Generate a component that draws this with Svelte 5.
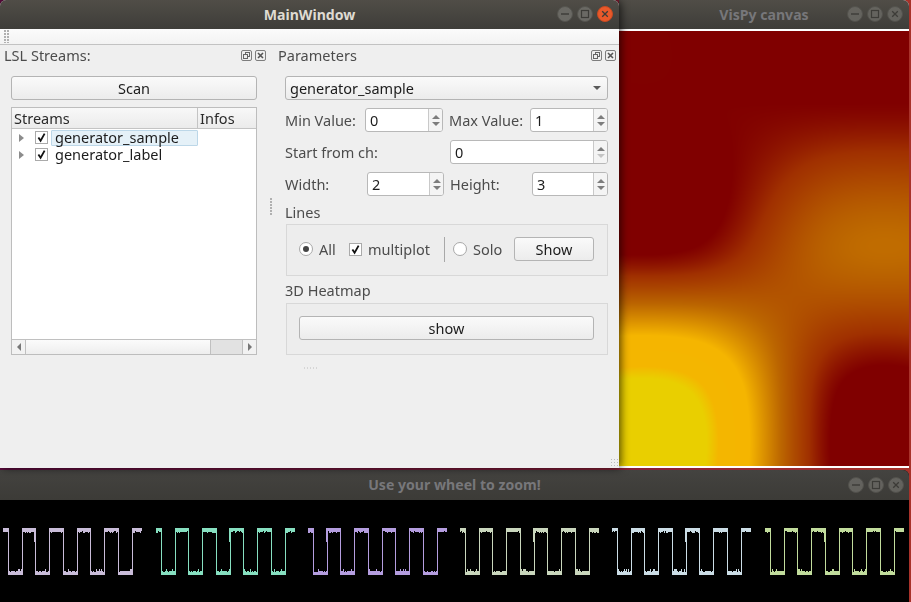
<script lang="ts">
	import { onMount } from 'svelte';

	let heat: HTMLCanvasElement;

	// 2 x 3 image shown by the VisPy window
	const cells = [
		[0, 0],
		[0, 0.36],
		[1, 0]
	];
	const stops: [number, number[]][] = [
		[0, [128, 0, 0]],
		[0.13, [160, 48, 0]],
		[0.36, [187, 101, 0]],
		[0.66, [245, 181, 0]],
		[0.92, [244, 182, 0]],
		[1, [233, 207, 0]]
	];

	const clampIdx = (i: number, n: number): number => Math.max(0, Math.min(n - 1, i));

	const catmull = (a: number, b: number, c: number, d: number, t: number): number =>
		0.5 * (2 * b + (c - a) * t + (2 * a - 5 * b + 4 * c - d) * t * t + (3 * b - a - 3 * c + d) * t * t * t);

	const sample = (gx: number, gy: number): number => {
		const ix = Math.floor(gx);
		const iy = Math.floor(gy);
		const col = [];
		for (let r = -1; r <= 2; r++) {
			const row = cells[clampIdx(iy + r, 3)];
			col.push(catmull(row[clampIdx(ix - 1, 2)], row[clampIdx(ix, 2)], row[clampIdx(ix + 1, 2)], row[clampIdx(ix + 2, 2)], gx - ix));
		}
		return catmull(col[0], col[1], col[2], col[3], gy - iy);
	};

	const colour = (v: number): number[] => {
		const t = Math.max(0, Math.min(1, v));
		for (let i = 1; i < stops.length; i++) {
			if (t <= stops[i][0]) {
				const k = (t - stops[i - 1][0]) / (stops[i][0] - stops[i - 1][0]);
				return stops[i][1].map((c, j) => c * k + stops[i - 1][1][j] * (1 - k));
			}
		}
		return stops[stops.length - 1][1];
	};

	onMount(() => {
		const w = heat.width;
		const h = heat.height;
		const ctx = heat.getContext('2d');
		if (!ctx) return;
		const img = ctx.createImageData(w, h);
		for (let y = 0; y < h; y++) {
			for (let x = 0; x < w; x++) {
				const c = colour(sample(((x + 0.5) / w) * 2 - 0.5, ((y + 0.5) / h) * 3 - 0.5));
				const o = (y * w + x) * 4;
				img.data[o] = c[0];
				img.data[o + 1] = c[1];
				img.data[o + 2] = c[2];
				img.data[o + 3] = 255;
			}
		}
		ctx.putImageData(img, 0, 0);
	});

	// square wave traces, one group per channel
	const groups = [
		{ x: 3, color: '#c9bcd9', seed: 11 },
		{ x: 156, color: '#86dfc0', seed: 23 },
		{ x: 308, color: '#b49ddf', seed: 37 },
		{ x: 460, color: '#c9d6bc', seed: 41 },
		{ x: 612, color: '#cbdde6', seed: 59 },
		{ x: 765, color: '#c1dc9c', seed: 67 }
	];

	const trace = (x0: number, seed: number): string => {
		let s = seed;
		const rnd = (): number => {
			s = (s * 16807) % 2147483647;
			return (s & 0xffff) / 0xffff;
		};
		for (let i = 0; i < 5; i++) rnd();
		const top = 28;
		const bottom = 75;
		let d = '';
		const band = (from: number, to: number, high: boolean) => {
			for (let x = Math.round(from); x < Math.round(to); x++) {
				const r = rnd();
				if (high) {
					const n = r < 0.6 ? 4 : r < 0.85 ? 5 : 3;
					d += `M${x} ${top}h1v${n}h-1z`;
				} else {
					const n = r < 0.6 ? 4 : r < 0.85 ? 3 : 6;
					d += `M${x} ${bottom - n}h1v${n}h-1z`;
				}
			}
		};
		const edges = [4.5, 18.5, 32, 46, 59.5, 73.5, 87, 101, 114.5, 128.5];
		const glitch = Math.floor(seed % 9);
		band(0, edges[0], true);
		edges.forEach((e, i) => {
			const x = Math.round(e);
			d += `M${x} ${top}h1v${bottom - top}h-1z`;
			if (i === glitch) d += `M${x - 1} ${top}h1v14h-1z`;
			const next = i < edges.length - 1 ? edges[i + 1] : e + 10;
			band(e, next, i % 2 === 1);
		});
		return d;
	};

	const waves = groups.map((g) => ({ ...g, d: trace(g.x, g.seed) }));
</script>

{#snippet winButtons(close: boolean, dim: boolean)}
	<div class="win-btns" class:dim>
		<svg width="16" height="16" viewBox="0 0 16 16">
			<circle cx="8" cy="8" r="7.5" fill="#6a6964" stroke="#55544f" />
			<path d="M4 8h8" stroke="#3c3b37" stroke-width="1.4" />
		</svg>
		<svg width="16" height="16" viewBox="0 0 16 16">
			<circle cx="8" cy="8" r="7.5" fill="#6a6964" stroke="#55544f" />
			<rect x="4.5" y="4.5" width="7" height="7" fill="none" stroke="#3c3b37" stroke-width="1.2" />
		</svg>
		<svg width="16" height="16" viewBox="0 0 16 16">
			<circle cx="8" cy="8" r="7.5" fill={close ? '#e9592a' : '#6a6964'} stroke={close ? '#c84a22' : '#55544f'} />
			<path d="M5.2 5.2l5.6 5.6M10.8 5.2l-5.6 5.6" stroke="#3c3b37" stroke-width="1.3" />
		</svg>
	</div>
{/snippet}

{#snippet dockIcons()}
	<div class="dock-icons">
		<svg width="11" height="11" viewBox="0 0 11 11">
			<rect x="0.5" y="0.5" width="10" height="10" rx="1.5" fill="none" stroke="#7d7d7d" />
			<rect x="4.5" y="2.5" width="4" height="4" fill="none" stroke="#666" />
			<rect x="2.5" y="4.5" width="4" height="4" fill="#efefef" stroke="#666" />
		</svg>
		<svg width="11" height="11" viewBox="0 0 11 11">
			<rect x="0.5" y="0.5" width="10" height="10" rx="1.5" fill="none" stroke="#7d7d7d" />
			<path d="M3 3l5 5M8 3l-5 5" stroke="#555" stroke-width="1.6" />
		</svg>
	</div>
{/snippet}

{#snippet check()}
	<span class="check">
		<svg width="13" height="13" viewBox="0 0 13 13">
			<path d="M3.4 6.4l2.2 3.4L9.6 2.6" fill="none" stroke="#111" stroke-width="1.8" />
		</svg>
	</span>
{/snippet}

{#snippet spin(value: string, width: number, lowDisabled = false)}
	<div class="spin" style="width:{width}px">
		<span class="spin-value">{value}</span>
		<span class="spin-arrows">
			<i class="up"></i>
			<i class="down" class:off={lowDisabled}></i>
		</span>
	</div>
{/snippet}

<div class="desktop">
	<section class="window vispy">
		<header class="titlebar">
			<span class="title dim">VisPy canvas</span>
			{@render winButtons(false, true)}
		</header>
		<canvas bind:this={heat} width="290" height="435"></canvas>
	</section>

	<section class="window zoom">
		<header class="titlebar zoom-bar">
			<span class="title dim">Use your wheel to zoom!</span>
			{@render winButtons(false, true)}
		</header>
		<svg class="plot" width="911" height="102" viewBox="0 0 911 102" shape-rendering="crispEdges">
			{#each waves as w}
				<path d={w.d} transform="translate({w.x} 0)" fill={w.color} />
			{/each}
		</svg>
	</section>

	<section class="window main">
		<header class="titlebar">
			<span class="title">MainWindow</span>
			{@render winButtons(true, false)}
		</header>
		<div class="toolbar"><span class="grip-v"></span></div>

		<div class="docks">
			<div class="dock left">
				<div class="dock-title">
					<span>LSL Streams:</span>
					{@render dockIcons()}
				</div>
				<div class="left-body">
					<button class="btn scan">Scan</button>
					<div class="tree">
						<div class="tree-head">
							<span class="h-streams">Streams</span>
							<span class="h-infos">Infos</span>
						</div>
						<div class="tree-rows">
							<div class="tree-row">
								<i class="branch"></i>
								{@render check()}
								<span class="item selected">generator_sample</span>
							</div>
							<div class="tree-row">
								<i class="branch"></i>
								{@render check()}
								<span class="item">generator_label</span>
							</div>
						</div>
						<div class="hscroll">
							<span class="sb-btn"><i class="tri-left"></i></span>
							<span class="sb-handle"></span>
							<span class="sb-trough"></span>
							<span class="sb-btn end"><i class="tri-right"></i></span>
						</div>
					</div>
				</div>
			</div>

			<div class="splitter"><span class="grip-side"></span></div>

			<div class="dock right">
				<div class="dock-title">
					<span>Parameters</span>
					{@render dockIcons()}
				</div>
				<div class="params">
					<div class="combo">
						<span>generator_sample</span>
						<i class="combo-arrow"></i>
					</div>
					<div class="row">
						<span class="lab w80">Min Value:</span>
						{@render spin('0', 78)}
						<span class="lab w81 gap6">Max Value:</span>
						{@render spin('1', 78)}
					</div>
					<div class="row">
						<span class="lab w165">Start from ch:</span>
						{@render spin('0', 158, true)}
					</div>
					<div class="row">
						<span class="lab w82">Width:</span>
						{@render spin('2', 77)}
						<span class="lab w82 gap6">Height:</span>
						{@render spin('3', 76)}
					</div>

					<div class="group-label first">Lines</div>
					<div class="group lines">
						<span class="radio on"></span>
						<span class="opt all">All</span>
						{@render check()}
						<span class="opt multi">multiplot</span>
						<span class="vline"></span>
						<span class="radio"></span>
						<span class="opt solo">Solo</span>
						<button class="btn show-small">Show</button>
					</div>

					<div class="group-label second">3D Heatmap</div>
					<div class="group">
						<button class="btn show-wide">show</button>
					</div>
					<div class="grip-bottom"></div>
				</div>
			</div>
		</div>
		<span class="size-grip"></span>
	</section>
</div>

<style>
	:global(body) {
		margin: 0;
		background: #8a2230;
	}

	.desktop {
		position: relative;
		width: 911px;
		height: 602px;
		overflow: hidden;
		background: linear-gradient(90deg, #5c0b3d 0%, #7b1a36 60%, #a8322a 100%);
		font-family: 'Noto Sans', 'Open Sans', sans-serif;
		font-size: 14.5px;
	}

	.window {
		position: absolute;
		display: flex;
		flex-direction: column;
	}

	.main {
		left: 0;
		top: 0;
		width: 619px;
		height: 468px;
		background: #efefef;
		border-radius: 6px 6px 0 0;
		box-shadow: 2px 0 9px rgba(0, 0, 0, 0.65);
		z-index: 3;
	}

	.vispy {
		left: 619px;
		top: 0;
		width: 290px;
		height: 468px;
		background: #fff;
		border-radius: 0 6px 0 0;
	}

	.vispy canvas {
		display: block;
		width: 290px;
		height: 435px;
		margin-top: 2px;
	}

	.zoom {
		left: 0;
		top: 470px;
		width: 909px;
		height: 132px;
		background: #000;
		border-radius: 0 6px 0 0;
		z-index: 2;
	}

	.plot {
		display: block;
	}

	.titlebar {
		position: relative;
		flex: none;
		height: 29px;
		display: flex;
		align-items: center;
		justify-content: center;
		background: linear-gradient(180deg, #504d47 0%, #3e3d39 100%);
		border-radius: inherit;
	}

	.zoom-bar {
		box-sizing: border-box;
		height: 30px;
		padding-bottom: 2px;
		background: linear-gradient(180deg, #444340 0%, #3c3b37 100%);
	}

	.title {
		font-size: 14.1px;
		font-weight: 700;
		color: #dfdbd2;
	}

	.title.dim {
		color: #77777a;
	}

	.win-btns {
		position: absolute;
		right: 6px;
		top: 6px;
		display: flex;
		gap: 4px;
	}

	.zoom-bar .win-btns {
		top: 7px;
		right: 5px;
	}

	.vispy .win-btns {
		right: 6px;
	}

	.win-btns svg {
		display: block;
	}

	.win-btns.dim svg {
		opacity: 0.85;
	}

	.toolbar {
		flex: none;
		height: 15px;
		background: linear-gradient(180deg, #fbfbfb, #f3f3f3);
		border-bottom: 1px solid #c2c2c2;
	}

	.grip-v {
		display: block;
		width: 6px;
		height: 13px;
		margin: 1px 0 0 4px;
		background-image: radial-gradient(circle at 1px 1px, #b0b0b0 0.9px, transparent 1px);
		background-size: 3px 3px;
	}

	.docks {
		flex: 1;
		display: flex;
		min-height: 0;
	}

	.dock-title {
		height: 20px;
		display: flex;
		align-items: center;
		justify-content: space-between;
		color: #4c4c4c;
	}

	.dock-icons {
		display: flex;
		gap: 3px;
	}

	.dock-icons svg {
		display: block;
	}

	.left {
		width: 267px;
		flex: none;
	}

	.left .dock-title {
		padding: 0 1px 0 4px;
	}

	.left-body {
		margin: 11px 10px 0 11px;
	}

	.btn {
		display: block;
		box-sizing: border-box;
		height: 24px;
		padding: 0;
		border: 1px solid #b4b4b4;
		border-radius: 3px;
		background: linear-gradient(180deg, #fafafa, #ececec);
		color: #1c1c1c;
		font: inherit;
		text-align: center;
	}

	.scan {
		width: 100%;
	}

	.tree {
		box-sizing: border-box;
		width: 246px;
		height: 248px;
		margin-top: 7px;
		border: 1px solid #bdbdbd;
		background: #fff;
		display: flex;
		flex-direction: column;
	}

	.tree-head {
		flex: none;
		height: 20px;
		display: flex;
		align-items: center;
		background: linear-gradient(180deg, #f8f8f8, #ebebeb);
		border-bottom: 1px solid #c4c4c4;
		color: #2a2a2a;
	}

	.h-streams {
		box-sizing: border-box;
		width: 186px;
		height: 100%;
		padding-left: 2px;
		border-right: 1px solid #c4c4c4;
		line-height: 20px;
	}

	.h-infos {
		padding-left: 2px;
	}

	.tree-rows {
		flex: 1;
	}

	.tree-row {
		height: 17px;
		display: flex;
		align-items: center;
		color: #1c1c1c;
	}

	.branch {
		width: 0;
		height: 0;
		margin: 0 11px 0 7px;
		border-left: 5px solid #8c8c8c;
		border-top: 4px solid transparent;
		border-bottom: 4px solid transparent;
	}

	.check {
		box-sizing: border-box;
		flex: none;
		width: 13px;
		height: 13px;
		border: 1px solid #aaa;
		background: #fff;
		position: relative;
	}

	.check svg {
		position: absolute;
		left: -1px;
		top: -1px;
	}

	.item {
		box-sizing: border-box;
		height: 16px;
		line-height: 12px;
		margin-left: 3px;
		padding: 0 0 0 3px;
		white-space: nowrap;
		border: 1px solid transparent;
	}

	.item.selected {
		width: 147px;
		background: #e5f1f8;
		border-color: #bcd7e8;
		border-radius: 1px;
	}

	.hscroll {
		flex: none;
		height: 14px;
		display: flex;
		border-top: 1px solid #c0c0c0;
	}

	.sb-btn {
		width: 13px;
		flex: none;
		display: flex;
		align-items: center;
		justify-content: center;
		border-right: 1px solid #c0c0c0;
		background: #f2f2f2;
	}

	.sb-btn.end {
		border-right: 0;
		border-left: 1px solid #c0c0c0;
	}

	.sb-handle {
		flex: 1;
		background: linear-gradient(180deg, #fbfbfb, #eeeeee);
		border-right: 1px solid #c0c0c0;
	}

	.sb-trough {
		width: 31px;
		background: #e2e2e2;
	}

	.tri-left,
	.tri-right {
		width: 0;
		height: 0;
		border-top: 4px solid transparent;
		border-bottom: 4px solid transparent;
	}

	.tri-left {
		border-right: 4px solid #777;
	}

	.tri-right {
		border-left: 4px solid #777;
	}

	.splitter {
		width: 11px;
		flex: none;
		position: relative;
	}

	.grip-side {
		position: absolute;
		left: 3px;
		top: 153px;
		width: 3px;
		height: 18px;
		background-image: radial-gradient(circle at 1px 1px, #b0b0b0 0.9px, transparent 1px);
		background-size: 3px 3px;
	}

	.right {
		flex: 1;
		min-width: 0;
	}

	.right .dock-title {
		padding-right: 3px;
	}

	.params {
		margin: 11px 11px 0 7px;
		display: flex;
		flex-direction: column;
	}

	.combo {
		box-sizing: border-box;
		height: 24px;
		padding: 0 5px 0 4px;
		display: flex;
		align-items: center;
		justify-content: space-between;
		border: 1px solid #b4b4b4;
		border-radius: 3px;
		background: linear-gradient(180deg, #fafafa, #ececec);
		color: #1c1c1c;
	}

	.combo-arrow {
		width: 0;
		height: 0;
		margin-right: 1px;
		border-left: 4px solid transparent;
		border-right: 4px solid transparent;
		border-top: 4px solid #5a5a5a;
	}

	.row {
		display: flex;
		align-items: center;
		height: 24px;
		margin-top: 8px;
	}

	.lab {
		flex: none;
		color: #4c4c4c;
		white-space: nowrap;
	}

	.w80 {
		width: 80px;
	}

	.w81 {
		width: 81px;
	}

	.w82 {
		width: 82px;
	}

	.w165 {
		width: 165px;
	}

	.gap6 {
		margin-left: 6px;
	}

	.spin {
		box-sizing: border-box;
		flex: none;
		height: 24px;
		display: flex;
		align-items: center;
		justify-content: space-between;
		border: 1px solid #b8b8b8;
		border-radius: 3px;
		background: #fff;
		color: #1c1c1c;
	}

	.spin-value {
		padding-left: 4px;
	}

	.spin-arrows {
		box-sizing: border-box;
		width: 14px;
		height: 100%;
		display: flex;
		flex-direction: column;
		align-items: center;
		justify-content: center;
		gap: 3px;
		border-left: 1px solid #c9c9c9;
		background: #f4f4f4;
		border-radius: 0 2px 2px 0;
	}

	.up,
	.down {
		width: 0;
		height: 0;
		border-left: 4px solid transparent;
		border-right: 4px solid transparent;
	}

	.up {
		border-bottom: 4px solid #7d7d7d;
	}

	.down {
		border-top: 4px solid #7d7d7d;
	}

	.down.off {
		border-top-color: #c4c4c4;
	}

	.group-label {
		height: 18px;
		line-height: 16px;
		color: #4c4c4c;
	}

	.group-label.first {
		margin-top: 8px;
	}

	.group-label.second {
		margin-top: 6px;
		margin-bottom: 1px;
	}

	.group {
		box-sizing: border-box;
		flex: none;
		width: 322px;
		height: 52px;
		margin: 2px 0 0 1px;
		padding: 12px 13px 14px 12px;
		display: flex;
		align-items: center;
		border: 1px solid #d8d8d8;
		background: #ededed;
	}

	.radio {
		box-sizing: border-box;
		flex: none;
		width: 14px;
		height: 14px;
		border: 1px solid #a8a8a8;
		border-radius: 50%;
		background: #fff;
		position: relative;
	}

	.radio.on::after {
		content: '';
		position: absolute;
		left: 3px;
		top: 3px;
		width: 6px;
		height: 6px;
		border-radius: 50%;
		background: #444;
	}

	.opt {
		flex: none;
		color: #4c4c4c;
		white-space: nowrap;
	}

	.all {
		width: 30px;
		margin-left: 6px;
	}

	.multi {
		width: 76px;
		margin-left: 6px;
	}

	.vline {
		flex: none;
		width: 1px;
		height: 25px;
		background: #a8a8a8;
		margin-right: 8px;
	}

	.solo {
		width: 41px;
		margin-left: 6px;
	}

	.show-small {
		flex: none;
		width: 80px;
	}

	.show-wide {
		width: 100%;
	}

	.grip-bottom {
		width: 16px;
		height: 2px;
		margin: 12px 0 0 18px;
		background-image: radial-gradient(#bdbdbd 0.7px, transparent 0.8px);
		background-size: 3px 2px;
	}

	.size-grip {
		position: absolute;
		right: 1px;
		bottom: 2px;
		width: 8px;
		height: 8px;
		background-image: radial-gradient(#bcbcbc 0.8px, transparent 0.9px);
		background-size: 3px 3px;
	}
</style>
